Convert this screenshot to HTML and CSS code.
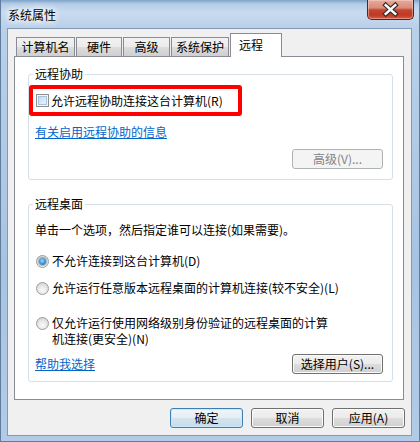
FILE: index.html
```html
<!DOCTYPE html>
<html lang="zh-CN">
<head>
<meta charset="utf-8">
<title>系统属性</title>
<link rel="stylesheet" href="styles.css">
</head>
<body>
<div class="window">
  <div class="titlebar">
    <span class="title">系统属性</span>
    <div class="close">
      <svg width="47" height="19" viewBox="0 0 47 19">
        <path d="M18.5 5 L28.5 14 M28.5 5 L18.5 14" stroke="#3b2a28" stroke-width="5" stroke-linecap="square" fill="none"/>
        <path d="M18.5 5 L28.5 14 M28.5 5 L18.5 14" stroke="#ffffff" stroke-width="2.6" stroke-linecap="square" fill="none"/>
      </svg>
    </div>
  </div>
  <div class="client">
    <div class="tabs">
      <div class="tab w1">计算机名</div>
      <div class="tab w2">硬件</div>
      <div class="tab w3">高级</div>
      <div class="tab w4">系统保护</div>
      <div class="tab active">远程</div>
    </div>
    <div class="panel">
      <fieldset class="group g1">
        <legend>远程协助</legend>
        <div class="highlight">
          <span class="checkbox"></span>
          <span class="check-label">允许远程协助连接这台计算机(R)</span>
        </div>
        <a class="link block-link">有关启用远程协助的信息</a>
        <div class="btnrow"><span class="btn disabled">高级(V)...</span></div>
      </fieldset>
      <fieldset class="group g2">
        <legend>远程桌面</legend>
        <p class="desc">单击一个选项，然后指定谁可以连接(如果需要)。</p>
        <div class="opt o1"><span class="radio checked"></span><span>不允许连接到这台计算机(D)</span></div>
        <div class="opt o2"><span class="radio"></span><span>允许运行任意版本远程桌面的计算机连接(较不安全)(L)</span></div>
        <div class="opt o3"><span class="radio"></span><span>仅允许运行使用网络级别身份验证的远程桌面的计算<br>机连接(更安全)(N)</span></div>
        <div class="btnrow between"><a class="link">帮助我选择</a><span class="btn">选择用户(S)...</span></div>
      </fieldset>
    </div>
    <div class="footer">
      <span class="btn fbtn default">确定</span>
      <span class="btn fbtn">取消</span>
      <span class="btn fbtn">应用(A)</span>
    </div>
  </div>
</div>
</body>
</html>
```
FILE: styles.css
```css
* { box-sizing: border-box; }
html, body { margin: 0; padding: 0; }
body {
  width: 420px;
  height: 442px;
  overflow: hidden;
  font-family: "Noto Sans CJK SC", "Liberation Sans", sans-serif;
  font-size: 12px;
  color: #000;
  background: #a9c4e3;
}
.window {
  width: 420px;
  height: 442px;
  display: flex;
  flex-direction: column;
  padding: 0 7px 5px 6px;
  border: 1px solid #5f7c9d;
  border-top: none;
  background: linear-gradient(180deg, #7fa2c8 0px, #b3cce7 4px, #c9dbef 12px, #b9d0e9 28px, #a8c3e2 60%, #b2cbe7 100%);
}
.titlebar {
  height: 28px;
  display: flex;
  align-items: flex-start;
  flex: none;
}
.title {
  padding: 1px 0 0 1px;
  line-height: 27px;
  font-size: 12px;
  color: #000;
  text-shadow: 0 0 6px #fff, 0 0 6px #fff, 0 0 10px #fff;
}
.close {
  margin-left: auto;
  margin-right: -2px;
  width: 47px;
  height: 20px;
  border: 1px solid #4e2620;
  border-top: none;
  border-radius: 0 0 5px 5px;
  background: linear-gradient(180deg, #e6aa9c 0%, #d98b7b 42%, #c4472f 52%, #bd3a24 78%, #d65a3f 100%);
  box-shadow: inset 0 0 0 1px rgba(255, 220, 210, 0.45);
  display: flex;
  align-items: center;
  justify-content: center;
}
.close svg { display: block; }
.client {
  flex: 1;
  background: #f0f0f0;
  border: 1px solid #8399b3;
  padding: 4px 6px 7px 6px;
  display: flex;
  flex-direction: column;
}
.tabs {
  display: flex;
  align-items: flex-end;
  gap: 1px;
  padding-left: 2px;
  height: 23px;
}
.tab {
  height: 19px;
  border: 1px solid #898c95;
  border-bottom: none;
  background: linear-gradient(180deg, #f2f2f2 0%, #ebebeb 50%, #dddddd 51%, #cfcfcf 100%);
  text-align: center;
  line-height: 18px;
  white-space: nowrap;
}
.w1 { width: 59px; }
.w2 { width: 46px; }
.w3 { width: 47px; }
.w4 { width: 58px; }
.tab.active {
  width: 52px;
  height: 24px;
  margin-bottom: -1px;
  background: #ffffff;
  position: relative;
  z-index: 1;
  line-height: 22px;
  text-align: left;
  padding-left: 8px;
}
.panel {
  width: 390px;
  background: #ffffff;
  border: 1px solid #898c95;
  padding: 0 10px 17px 13px;
}
.group {
  margin: 0;
  min-width: 0;
  border: 1px solid #d5dfe5;
  border-radius: 3px;
  padding: 0 9px 10px 6px;
}
.g1 { margin-top: 9px; }
.g2 { margin-top: 16px; padding-bottom: 7px; }
legend {
  padding: 0 2px;
  margin-left: -2px;
  line-height: 16px;
}
.highlight {
  margin: 3px 0 0 -6px;
  width: 213px;
  height: 31px;
  border: 4px solid #ff0000;
  border-radius: 3px;
  padding-left: 3px;
  display: flex;
  align-items: center;
  white-space: nowrap;
}
.checkbox {
  width: 13px;
  height: 13px;
  flex: none;
  border: 1px solid #8e8f8f;
  background: linear-gradient(135deg, #b9d3ec 0%, #dbe8f5 55%, #f3f8fc 100%);
  box-shadow: inset 0 0 0 1px #f6f6f6, inset 0 0 0 2px #a9c3dd;
  margin-right: 2px;
}
.check-label { line-height: 16px; }
.link {
  color: #0066cc;
  text-decoration: underline;
  line-height: 16px;
}
.block-link {
  display: block;
  margin-top: 8px;
  width: max-content;
}
.btnrow {
  display: flex;
  justify-content: flex-end;
  align-items: center;
  margin-top: 9px;
}
.btnrow.between {
  justify-content: space-between;
  margin-top: 7px;
}
.btn {
  display: inline-flex;
  align-items: center;
  justify-content: center;
  width: 91px;
  height: 20px;
  border: 1px solid #707070;
  border-radius: 3px;
  background: linear-gradient(180deg, #f2f2f2 0%, #ebebeb 48%, #dddddd 52%, #cfcfcf 100%);
  box-shadow: inset 0 0 0 1px #fbfbfb;
  line-height: 16px;
  white-space: nowrap;
  color: #000;
}
.btn.disabled {
  border-color: #adb2b5;
  background: #f4f4f4;
  box-shadow: none;
  color: #838383;
}
.desc {
  margin: 10px 0 0 0;
  line-height: 16px;
  white-space: nowrap;
}
.opt {
  display: flex;
  align-items: flex-start;
  margin-left: 1px;
  line-height: 16px;
  white-space: nowrap;
}
.o1 { margin-top: 15px; }
.o2 { margin-top: 11px; }
.o3 { margin-top: 19px; line-height: 16px; }
.radio {
  width: 13px;
  height: 13px;
  flex: none;
  margin: 2px 3px 0 0;
  border-radius: 50%;
  border: 1px solid #9c9c9c;
  background: radial-gradient(circle at 50% 65%, #fbfbfb 0%, #e8e8e8 45%, #c9c9c9 100%);
  display: flex;
  align-items: center;
  justify-content: center;
}
.radio.checked::after {
  content: "";
  width: 7px;
  height: 7px;
  border-radius: 50%;
  background: radial-gradient(circle at 45% 40%, #9ed8fb 0%, #3f97d8 50%, #1a5f9c 100%);
  box-shadow: 0 0 0 1px rgba(30, 80, 130, 0.35);
}
.footer {
  display: flex;
  justify-content: flex-end;
  gap: 8px;
  margin-top: 8px;
}
.fbtn { width: 73px; }
.fbtn.default {
  border-color: #3c7fb1;
  box-shadow: inset 0 0 0 1px #c7ecff;
  background: linear-gradient(180deg, #f0f6fa 0%, #e5eef5 48%, #d5e3ee 52%, #c9dbe9 100%);
}
```
